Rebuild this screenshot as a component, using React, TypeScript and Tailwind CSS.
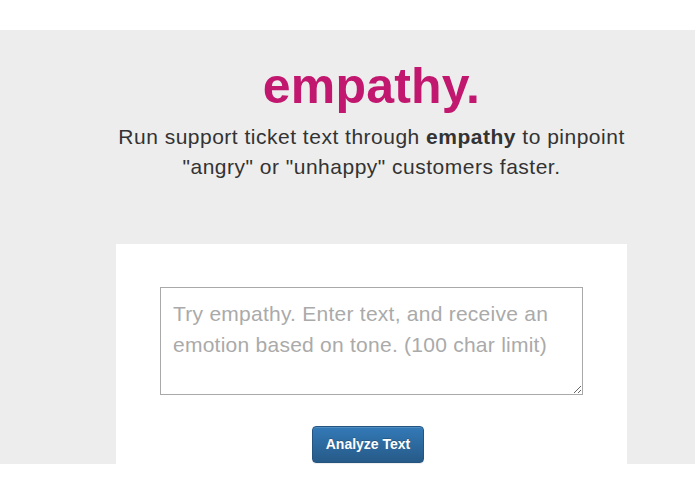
import React from 'react';

export default function App() {
    return (
        <div className="min-h-[494px] bg-white text-[#333] font-['Liberation_Sans',Arial,sans-serif]">
            <div className="h-[30px] bg-white" />

            <section className="bg-[#ededed]">
                <div className="ml-[116px] w-[511px] flex flex-col items-center">
                    <h1 className="mt-[29px] text-[50px] leading-[55px] font-bold text-[#c1176e] tracking-[0.2px]">
                        empathy.
                    </h1>
                    <p className="mt-[8px] text-[21px] leading-[30px] tracking-[0.5px] text-center whitespace-nowrap">
                        Run support ticket text through <b className="font-bold">empathy</b> to pinpoint
                        <br />
                        "angry" or "unhappy" customers faster.
                    </p>

                    <div className="mt-[62px] w-full bg-white flex flex-col items-center pt-[43px] pb-[1px]">
                        <textarea
                            placeholder="Try empathy. Enter text, and receive an emotion based on tone. (100 char limit)"
                            maxLength={100}
                            className="block w-[423px] h-[108px] border border-[#a9a9a9] bg-white px-[12px] py-[10px] text-[21px] leading-[31px] tracking-[0.25px] text-[#333] placeholder:text-[#aaa] outline-none resize"
                        />
                        <button
                            type="button"
                            className="mt-[31px] ml-[-7px] h-[37px] w-[112px] rounded-[4px] border border-[#245580] bg-gradient-to-b from-[#337ab7] to-[#265a88] text-white text-[14px] font-bold [text-shadow:0_-1px_0_rgba(0,0,0,0.2)] shadow-[inset_0_1px_0_rgba(255,255,255,0.15),0_1px_1px_rgba(0,0,0,0.075)]"
                        >
                            Analyze Text
                        </button>
                    </div>
                </div>
            </section>

            <div className="h-[30px] bg-white" />
        </div>
    );
}
